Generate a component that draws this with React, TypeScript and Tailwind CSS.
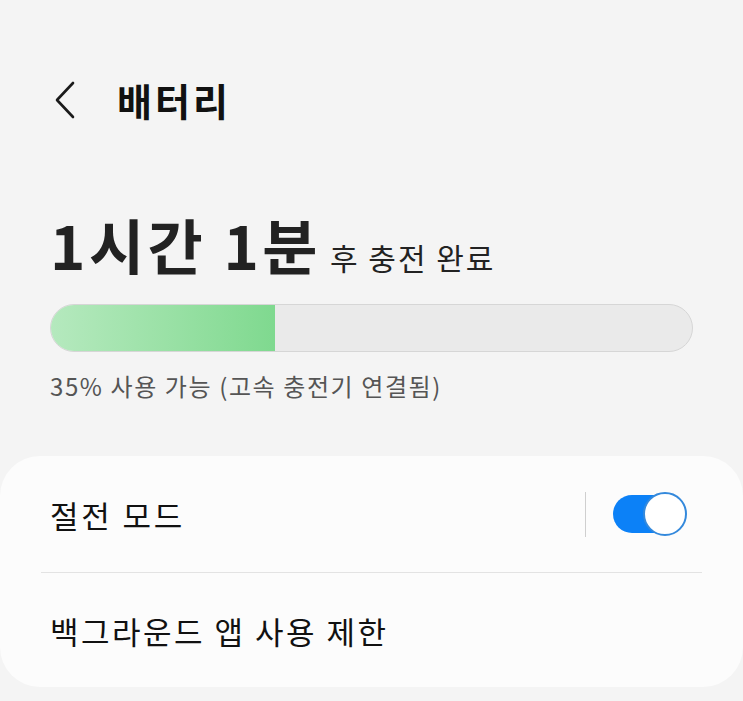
import React from "react";

export default function App() {
  return (
    <div
      className="w-[743px] h-[701px] bg-[#f4f4f4] overflow-hidden flex flex-col"
      style={{ fontFamily: '"Noto Sans CJK KR", "Noto Sans", sans-serif' }}
    >
      {/* Header */}
      <div className="h-[44px] mt-[78px] flex items-center pl-[54px]">
        <svg width="22" height="38" viewBox="0 0 22 38" fill="none" className="shrink-0">
          <path d="M19 2 L3 19 L19 36" stroke="#1a1a1a" strokeWidth="2.6" strokeLinecap="round" strokeLinejoin="round" />
        </svg>
        <span className="ml-[41px] text-[38px] font-bold leading-none text-[#111] tracking-[3px]">배터리</span>
      </div>

      {/* Time remaining */}
      <div className="mt-[92px] pl-[50px] flex items-baseline h-[60px]">
        <span className="text-[60px] font-bold leading-none text-[#222] tracking-[3.5px]">1시간 1분</span>
        <span className="ml-[9px] text-[30px] leading-none text-[#222] tracking-[2px]">후 충전 완료</span>
      </div>

      {/* Progress bar */}
      <div className="mt-[30px] mx-[50px] h-[48px] rounded-full border border-[#d6d6d6] bg-[#eaeaea] overflow-hidden">
        <div
          className="h-full bg-gradient-to-r from-[#b5e9be] to-[#7fd98f]"
          style={{ width: "35%" }}
        />
      </div>

      <div className="mt-[22px] pl-[50px] text-[24px] leading-none text-[#555] tracking-[1.6px]">
        35% 사용 가능 (고속 충전기 연결됨)
      </div>

      {/* Card */}
      <div className="mt-[58px] bg-[#fcfcfc] rounded-[40px] h-[231px] flex flex-col">
        <div className="h-[116px] flex items-center pl-[50px] pr-[56px]">
          <span className="flex-1 text-[31px] leading-none text-[#111] tracking-[2.8px]">절전 모드</span>
          <div className="w-px h-[45px] bg-[#cfcfcf] mr-[27px]" />
          <div className="relative w-[74px] h-[44px] flex items-center">
            <div className="w-[60px] h-[38px] rounded-full bg-[#0c81f7]" />
            <div className="absolute right-0 top-0 w-[44px] h-[44px] rounded-full bg-white border-[2.5px] border-[#3489dc]" />
          </div>
        </div>
        <div className="h-px bg-[#e3e3e3] mx-[41px]" />
        <div className="h-[114px] flex items-center pl-[50px]">
          <span className="text-[31px] leading-none text-[#111] tracking-[2.5px]">백그라운드 앱 사용 제한</span>
        </div>
      </div>
    </div>
  );
}
